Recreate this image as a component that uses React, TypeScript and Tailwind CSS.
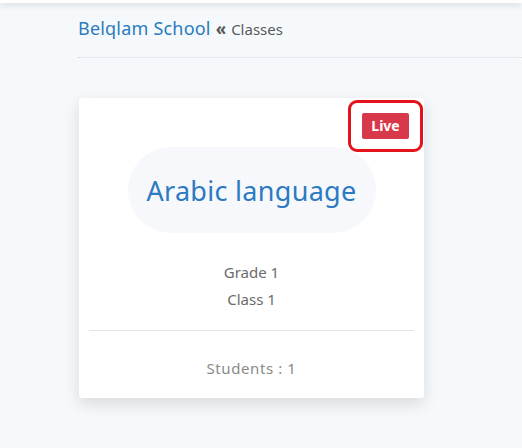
const ClassCard = () => {
  return (
    <div className="relative w-[345px] h-[300px] bg-white rounded-[3px] shadow-[0_6px_16px_rgba(0,0,0,0.12)] flex flex-col items-center">
      {/* status badge + highlight annotation */}
      <div className="absolute top-[2px] right-[1px] w-[75px] h-[52px] rounded-[9px] border-[3px] border-[#e3131c] flex items-center justify-center">
        <span className="bg-[#d7384a] text-white text-[14px] font-bold leading-none rounded-[2px] px-[9px] py-[6px]">
          Live
        </span>
      </div>

      <div className="mt-[49px] w-[248px] h-[86px] rounded-full bg-[#f6f8fb] flex items-center justify-center">
        <h2 className="text-[27px] text-[#2c7ac2] leading-none tracking-[0.3px]">Arabic language</h2>
      </div>

      <div className="mt-[26px] flex flex-col items-center text-[15px] text-[#6b6b6b] leading-[27px]">
        <p>Grade 1</p>
        <p>Class 1</p>
      </div>

      <div className="mt-[17px] w-[325px] border-t border-[#e4e4e4]" />

      <p className="mt-[30px] text-[15px] text-[#8a8a8a] leading-none tracking-[0.6px]">Students : 1</p>
    </div>
  );
};

const App = () => {
  return (
    <div className="min-h-[448px] bg-[#f5f9fc] font-['Noto_Sans',sans-serif] overflow-hidden">
      <div className="h-[3px] bg-white shadow-[0_2px_6px_rgba(0,0,0,0.18)]" />

      <div className="pl-[78px]">
        <div className="pt-[12px] flex items-baseline gap-[5px]">
          <span className="text-[18px] text-[#2b7bbd] tracking-[0.2px]">Belqlam School</span>
          <span className="text-[17px] font-bold text-[#555]">«</span>
          <span className="text-[15px] text-[#5a5a5a]">Classes</span>
        </div>

        <div className="mt-[15px] border-t border-dotted border-[#d5d9dd]" />

        <div className="mt-[40px] pl-[1px]">
          <ClassCard />
        </div>
      </div>
    </div>
  );
};

export default App;
